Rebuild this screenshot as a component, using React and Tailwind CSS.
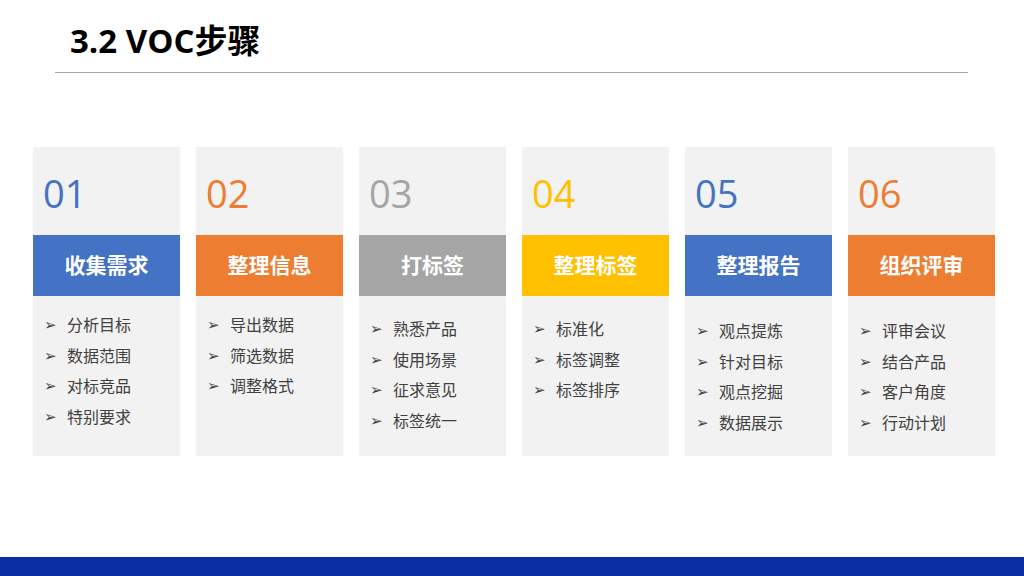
const cards = [
  { n: "01", t: "收集需求", c: "text-[#4472c4]", b: "bg-[#4472c4]", pt: "pt-[14px]", items: ["分析目标", "数据范围", "对标竞品", "特别要求"] },
  { n: "02", t: "整理信息", c: "text-[#ed7d31]", b: "bg-[#ed7d31]", pt: "pt-[14px]", items: ["导出数据", "筛选数据", "调整格式"] },
  { n: "03", t: "打标签", c: "text-[#a5a5a5]", b: "bg-[#a5a5a5]", pt: "pt-[18px]", items: ["熟悉产品", "使用场景", "征求意见", "标签统一"] },
  { n: "04", t: "整理标签", c: "text-[#ffc000]", b: "bg-[#ffc000]", pt: "pt-[18px]", items: ["标准化", "标签调整", "标签排序"] },
  { n: "05", t: "整理报告", c: "text-[#4472c4]", b: "bg-[#4472c4]", pt: "pt-[20px]", items: ["观点提炼", "针对目标", "观点挖掘", "数据展示"] },
  { n: "06", t: "组织评审", c: "text-[#ed7d31]", b: "bg-[#ed7d31]", pt: "pt-[20px]", items: ["评审会议", "结合产品", "客户角度", "行动计划"] },
];

export default function App() {
  return (
    <div className="w-[1024px] h-[576px] bg-white flex flex-col relative overflow-hidden" style={{ fontFamily: '"Open Sans","Noto Sans CJK SC",sans-serif' }}>
      <div className="pl-[70px] pt-[20px] h-[64px] text-[33px] font-bold text-black leading-[42px]">3.2 VOC步骤</div>
      <div className="ml-[55px] w-[913px] h-[1px] bg-[#a6a6a6] mt-[8px]"></div>
      <div className="flex gap-[16px] ml-[33px] mt-[74px]">
        {cards.map((c) => (
          <div key={c.n} className="w-[147px] h-[309px] bg-[#f2f2f2] flex flex-col">
            <div className={`h-[88px] pl-[10px] pt-[24px] text-[38px] leading-[44px] ${c.c}`}>{c.n}</div>
            <div className={`h-[61px] ${c.b} flex items-center justify-center text-white text-[21px] font-bold`}>{c.t}</div>
            <div className={`${c.pt} pl-[11px] flex flex-col`}>
              {c.items.map((it) => (
                <div key={it} className="h-[30.6px] flex items-center text-[16px] text-[#404040]">
                  <span className="w-[23px] text-[15px] text-[#404040]" style={{ fontFamily: '"DejaVu Sans",sans-serif' }}>➢</span>
                  <span>{it}</span>
                </div>
              ))}
            </div>
          </div>
        ))}
      </div>
      <div className="absolute left-0 bottom-0 w-full h-[19px] bg-[#0b2ea3]"></div>
    </div>
  );
}
